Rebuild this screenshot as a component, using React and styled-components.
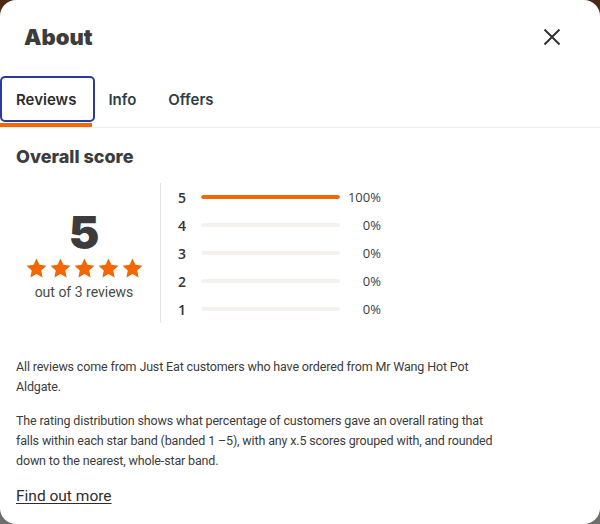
import React from 'react'
import styled, { createGlobalStyle } from 'styled-components'

const GlobalStyle = createGlobalStyle`
    html, body {
        margin: 0;
        padding: 0;
        height: 100%;
    }
    body {
        background: linear-gradient(180deg, #4a2a12 0%, #6a4a2a 40%, #6e6e6e 100%);
        font-family: Roboto, "Liberation Sans", sans-serif;
        color: #3c3c3c;
    }
`

const Modal = styled.div`
    width: 600px;
    height: 524px;
    box-sizing: border-box;
    background: #fff;
    border-radius: 16px;
    overflow: hidden;
    display: flex;
    flex-direction: column;
`

const Header = styled.div`
    display: flex;
    align-items: center;
    justify-content: space-between;
    padding: 18px 39px 0 24px;
    height: 37px;
`

const Title = styled.h1`
    margin: 0;
    font-family: Inter, "Liberation Sans", sans-serif;
    font-weight: 900;
    font-size: 22px;
    color: #3c3c3c;
`

const Close = styled.button`
    border: none;
    background: none;
    padding: 0;
    width: 18px;
    height: 18px;
    display: flex;
    align-items: center;
    justify-content: center;
    cursor: pointer;
`

const Tabs = styled.div`
    display: flex;
    margin-top: 21px;
    border-bottom: 1px solid #ececec;
`

const Tab = styled.div`
    position: relative;
    box-sizing: border-box;
    height: 51px;
    padding: 0 16px 5px 16px;
    display: flex;
    align-items: center;
    font-family: Inter, "Liberation Sans", sans-serif;
    font-weight: 600;
    font-size: 15px;
    color: ${({ $active }) => ($active ? '#2d2d2d' : '#2f3d45')};
    ${({ $active }) => $active && `
        &::before {
            content: '';
            position: absolute;
            left: 0;
            top: 0;
            right: -3px;
            bottom: 5px;
            border: 2px solid #2b3b99;
            border-radius: 5px;
        }
        &::after {
            content: '';
            position: absolute;
            left: 0;
            right: 0;
            bottom: 0;
            height: 4px;
            background: #f36805;
        }
    `}
`

const Body = styled.div`
    padding: 18px 16px 0 16px;
`

const SubTitle = styled.h2`
    margin: 0;
    font-family: Inter, "Liberation Sans", sans-serif;
    font-weight: 800;
    font-size: 18px;
    color: #3c3c3c;
`

const Score = styled.div`
    display: flex;
    margin-top: 16px;
`

const Summary = styled.div`
    width: 136px;
    padding-right: 8px;
    display: flex;
    flex-direction: column;
    align-items: center;
    justify-content: center;
    border-right: 1px solid #e4e4e4;
    height: 140px;
`

const BigNumber = styled.div`
    font-family: Inter, "Liberation Sans", sans-serif;
    font-weight: 900;
    font-size: 46px;
    line-height: 46px;
    color: #3c3c3c;
    margin-top: 2px;
`

const Stars = styled.div`
    display: flex;
    gap: 1px;
    margin-top: 2px;
`

const Reviews = styled.div`
    font-size: 14px;
    color: #4a4a4a;
    margin-top: 4px;
`

const Distribution = styled.div`
    display: flex;
    flex-direction: column;
    padding: 0 0 0 17px;
`

const Row = styled.div`
    display: flex;
    align-items: center;
    height: 28px;
`

const Band = styled.span`
    width: 23px;
    font-family: "Open Sans", "Liberation Sans", sans-serif;
    font-weight: 600;
    font-size: 14px;
    color: #333;
`

const Track = styled.div`
    width: 139px;
    height: 4px;
    border-radius: 2px;
    background: #f5f2ee;
    overflow: hidden;
`

const Fill = styled.div`
    height: 100%;
    background: #f36805;
    border-radius: 2px;
`

const Percent = styled.span`
    width: 41px;
    padding-right: ${({ $full }) => ($full ? '0' : '3px')};
    text-align: right;
    font-family: "Open Sans", "Liberation Sans", sans-serif;
    font-size: 13px;
    color: #3c3c3c;
`

const Text = styled.p`
    margin: 0 0 14px 0;
    font-size: 12.5px;
    line-height: 20px;
    letter-spacing: -0.15px;
    color: #3c3c3c;
`

const Notes = styled.div`
    margin-top: 34px;
    max-width: 490px;
`

const More = styled.a`
    display: inline-block;
    margin-top: 2px;
    font-size: 15.5px;
    color: #2d2d2d;
    text-decoration: underline;
    text-underline-offset: 2px;
    cursor: pointer;
`

const Star = () => (
    <svg width="23" height="23" viewBox="0 0 24 24">
        <path d="M12 1.5l3.1 6.7 7.3.9-5.4 5 1.4 7.2L12 17.8l-6.4 3.5 1.4-7.2-5.4-5 7.3-.9z" fill="#f36805" />
    </svg>
)

const bands = [
    { band: 5, value: 100 },
    { band: 4, value: 0 },
    { band: 3, value: 0 },
    { band: 2, value: 0 },
    { band: 1, value: 0 },
]

const App = () => {
    return (
        <>
            <GlobalStyle />
            <Modal>
                <Header>
                    <Title>About</Title>
                    <Close aria-label="Close">
                        <svg width="18" height="18" viewBox="0 0 18 18">
                            <path d="M1.5 1.5L16.5 16.5M16.5 1.5L1.5 16.5" stroke="#333" strokeWidth="2" />
                        </svg>
                    </Close>
                </Header>
                <Tabs>
                    <Tab $active>Reviews</Tab>
                    <Tab>Info</Tab>
                    <Tab>Offers</Tab>
                </Tabs>
                <Body>
                    <SubTitle>Overall score</SubTitle>
                    <Score>
                        <Summary>
                            <BigNumber>5</BigNumber>
                            <Stars>
                                {[0, 1, 2, 3, 4].map(i => <Star key={i} />)}
                            </Stars>
                            <Reviews>out of 3 reviews</Reviews>
                        </Summary>
                        <Distribution>
                            {bands.map(b => (
                                <Row key={b.band}>
                                    <Band>{b.band}</Band>
                                    <Track>
                                        <Fill style={{ width: b.value + '%' }} />
                                    </Track>
                                    <Percent $full={b.value === 100}>{b.value}%</Percent>
                                </Row>
                            ))}
                        </Distribution>
                    </Score>
                    <Notes>
                        <Text>
                            All reviews come from Just Eat customers who have ordered from Mr Wang Hot Pot Aldgate.
                        </Text>
                        <Text>
                            The rating distribution shows what percentage of customers gave an overall rating that falls within each star band (banded 1 –5), with any x.5 scores grouped with, and rounded down to the nearest, whole-star band.
                        </Text>
                        <More>Find out more</More>
                    </Notes>
                </Body>
            </Modal>
        </>
    )
}

export default App
